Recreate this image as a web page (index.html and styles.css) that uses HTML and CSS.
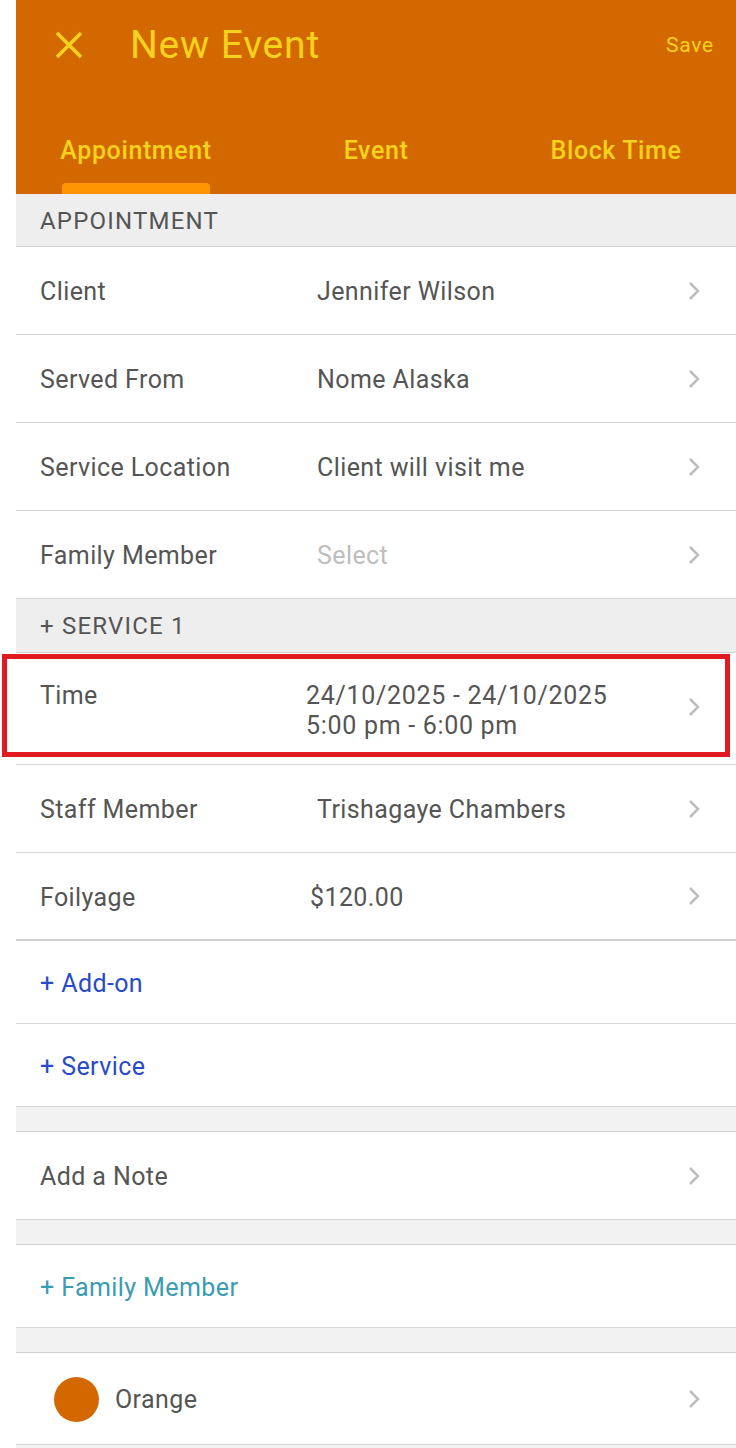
FILE: index.html
```html
<!DOCTYPE html>
<html lang="en">
<head>
    <meta charset="UTF-8">
    <meta name="viewport" content="width=device-width, initial-scale=1.0">
    <title>New Event</title>
    <link rel="stylesheet" href="styles.css">
</head>
<body>
    <div class="screen">
        <div class="header">
            <div class="title-row">
                <svg class="close-icon" width="30" height="30" viewBox="0 0 30 30">
                    <path d="M3 3 L27 27 M27 3 L3 27" stroke="#f5d21b" stroke-width="3.5" fill="none"/>
                </svg>
                <h1>New Event</h1>
                <span class="save">Save</span>
            </div>
            <div class="tabs">
                <div class="tab active">Appointment</div>
                <div class="tab">Event</div>
                <div class="tab">Block Time</div>
            </div>
        </div>

        <div class="section-head">APPOINTMENT</div>

        <div class="row">
            <span class="label">Client</span>
            <span class="value">Jennifer Wilson</span>
            <svg class="chev" width="14" height="22" viewBox="0 0 14 22"><path d="M3 3 L11 11 L3 19" stroke="#bdbdbd" stroke-width="2.5" fill="none"/></svg>
        </div>
        <div class="row">
            <span class="label">Served From</span>
            <span class="value">Nome Alaska</span>
            <svg class="chev" width="14" height="22" viewBox="0 0 14 22"><path d="M3 3 L11 11 L3 19" stroke="#bdbdbd" stroke-width="2.5" fill="none"/></svg>
        </div>
        <div class="row">
            <span class="label">Service Location</span>
            <span class="value">Client will visit me</span>
            <svg class="chev" width="14" height="22" viewBox="0 0 14 22"><path d="M3 3 L11 11 L3 19" stroke="#bdbdbd" stroke-width="2.5" fill="none"/></svg>
        </div>
        <div class="row">
            <span class="label">Family Member</span>
            <span class="value placeholder">Select</span>
            <svg class="chev" width="14" height="22" viewBox="0 0 14 22"><path d="M3 3 L11 11 L3 19" stroke="#bdbdbd" stroke-width="2.5" fill="none"/></svg>
        </div>

        <div class="section-head small">+ SERVICE 1</div>

        <div class="row time-row">
            <span class="label">Time</span>
            <span class="value time-value">24/10/2025 - 24/10/2025<br>5:00 pm - 6:00 pm</span>
            <svg class="chev" width="14" height="22" viewBox="0 0 14 22"><path d="M3 3 L11 11 L3 19" stroke="#bdbdbd" stroke-width="2.5" fill="none"/></svg>
            <div class="highlight"></div>
        </div>
        <div class="row">
            <span class="label">Staff Member</span>
            <span class="value">Trishagaye Chambers</span>
            <svg class="chev" width="14" height="22" viewBox="0 0 14 22"><path d="M3 3 L11 11 L3 19" stroke="#bdbdbd" stroke-width="2.5" fill="none"/></svg>
        </div>
        <div class="row dark-line">
            <span class="label">Foilyage</span>
            <span class="value price">$120.00</span>
            <svg class="chev" width="14" height="22" viewBox="0 0 14 22"><path d="M3 3 L11 11 L3 19" stroke="#bdbdbd" stroke-width="2.5" fill="none"/></svg>
        </div>
        <div class="row link-row"><span class="link">+ Add-on</span></div>
        <div class="row link-row"><span class="link">+ Service</span></div>

        <div class="gap"></div>

        <div class="row">
            <span class="label">Add a Note</span>
            <svg class="chev" width="14" height="22" viewBox="0 0 14 22"><path d="M3 3 L11 11 L3 19" stroke="#bdbdbd" stroke-width="2.5" fill="none"/></svg>
        </div>

        <div class="gap"></div>

        <div class="row link-row"><span class="link teal">+ Family Member</span></div>

        <div class="gap"></div>

        <div class="row color-row">
            <span class="dot"></span>
            <span class="label">Orange</span>
            <svg class="chev" width="14" height="22" viewBox="0 0 14 22"><path d="M3 3 L11 11 L3 19" stroke="#bdbdbd" stroke-width="2.5" fill="none"/></svg>
        </div>
        <div class="gap"></div>
    </div>
</body>
</html>
```

FILE: styles.css
```css
body {
    margin: 0;
    background: #fff;
    font-family: Roboto, "Noto Sans", sans-serif;
}
.screen {
    margin-left: 16px;
    width: 720px;
}
.header {
    background: #d46800;
    height: 194px;
    display: flex;
    flex-direction: column;
}
.title-row {
    display: flex;
    align-items: center;
    height: 90px;
    padding: 0 22px 0 38px;
}
.close-icon {
    margin-right: 46px;
}
h1 {
    margin: 0;
    flex-grow: 1;
    font-size: 39px;
    font-weight: 400;
    letter-spacing: 0.8px;
    color: #f5d21b;
}
.save {
    color: #f5d21b;
    font-size: 21px;
    letter-spacing: 0.8px;
}
.tabs {
    display: flex;
    margin-top: 22px;
    flex-grow: 1;
}
.tab {
    flex: 1;
    text-align: center;
    color: #f5d21b;
    font-size: 25px;
    font-weight: 500;
    letter-spacing: 0.6px;
    padding-top: 24px;
    position: relative;
}
.tab.active::after {
    content: "";
    position: absolute;
    left: 46px;
    right: 46px;
    bottom: 0;
    height: 11px;
    background: #ff9500;
    border-radius: 4px 4px 0 0;
}
.section-head {
    background: #eeeeee;
    color: #555;
    font-size: 24px;
    letter-spacing: 1.2px;
    height: 52px;
    line-height: 54px;
    padding-left: 24px;
    border-bottom: 1px solid #d0d0d0;
}
.section-head.small {
    height: 53px;
    line-height: 55px;
}
.row {
    display: flex;
    align-items: center;
    box-sizing: border-box;
    height: 88px;
    padding: 2px 35px 0 24px;
    border-bottom: 1px solid #d6d6d6;
    font-size: 25px;
    letter-spacing: 0.4px;
    color: #555;
    position: relative;
}
.label {
    width: 277px;
    flex-shrink: 0;
}
.value {
    flex-grow: 1;
}
.placeholder {
    color: #bdbdbd;
}
.price {
    margin-left: -7px;
}
.chev {
    margin-left: auto;
    margin-top: -2px;
}
.time-row {
    height: 112px;
    padding-top: 0;
    align-items: flex-start;
}
.time-row .label {
    padding-top: 28px;
    width: 266px;
}
.time-row .value {
    padding-top: 28px;
    line-height: 30px;
    letter-spacing: 0.7px;
}
.time-row .chev {
    align-self: center;
    margin-top: -4px;
}
.highlight {
    position: absolute;
    left: -14px;
    top: 1px;
    width: 718px;
    height: 93px;
    border: 5px solid #e11b1f;
}
.dark-line {
    border-bottom: 2px solid #cfcfcf;
}
.link-row {
    height: 83px;
}
.link {
    color: #2a4bc6;
}
.link.teal {
    color: #3a9bb2;
}
.gap {
    background: #f2f2f2;
    height: 24px;
    border-bottom: 1px solid #d0d0d0;
}
.color-row {
    height: 92px;
    padding-left: 38px;
}
.dot {
    width: 45px;
    height: 45px;
    border-radius: 50%;
    background: #d46800;
    margin-right: 16px;
}
.color-row .label {
    width: auto;
}
```
